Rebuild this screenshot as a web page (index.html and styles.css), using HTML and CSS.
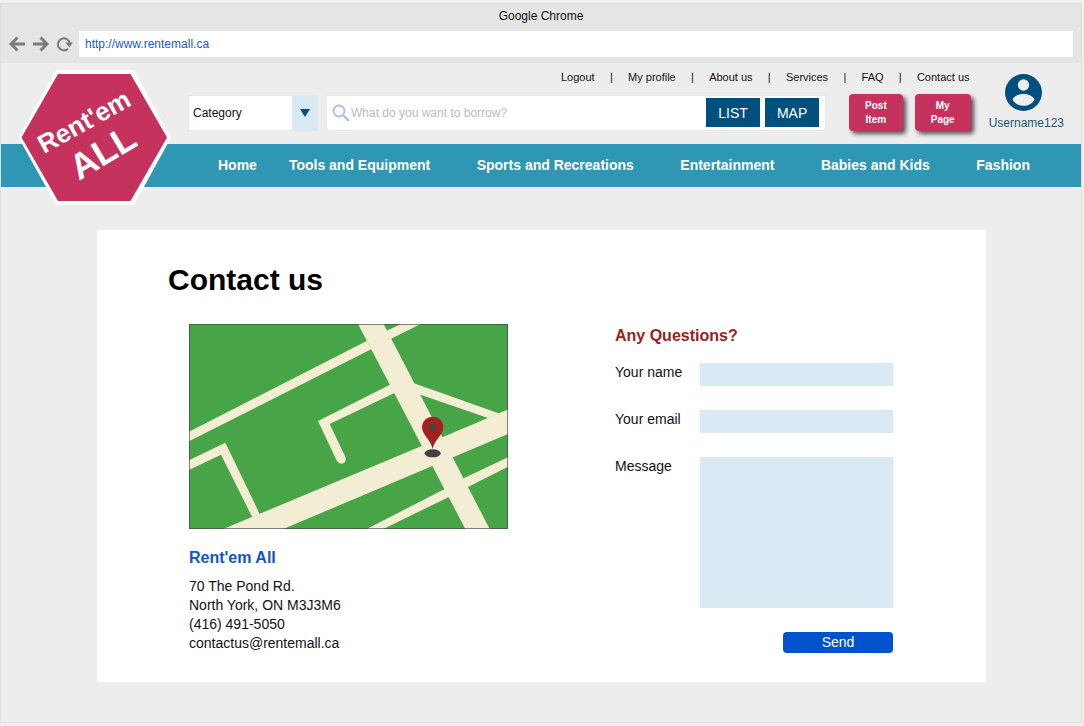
FILE: index.html
```html
<!DOCTYPE html>
<html lang="en">
<head>
<meta charset="utf-8">
<title>Rent'em All - Contact us</title>
<link rel="stylesheet" href="styles.css">
</head>
<body>
<div class="window">
  <div class="chrome">
    <div class="chrome-title">Google Chrome</div>
    <div class="toolbar">
      <div class="toolbar-buttons">
        <button class="icon-button" type="button" aria-label="Back">
          <svg viewBox="0 0 16 16"><path d="M16 8H3M8.500 1.500L2 8l6.500 6.500" fill="none" stroke="#7a7a7a" stroke-width="2.900"/></svg>
        </button>
        <button class="icon-button" type="button" aria-label="Forward">
          <svg viewBox="0 0 16 16"><path d="M0 8H13M7.500 1.500L14 8l-6.500 6.500" fill="none" stroke="#7a7a7a" stroke-width="2.900"/></svg>
        </button>
        <button class="icon-button" type="button" aria-label="Reload">
          <svg viewBox="0 0 16 16"><path d="M11 12.800A6 6 0 1 1 12.800 7" fill="none" stroke="#7a7a7a" stroke-width="2"/><path d="M8.500 6.500H16L12.300 11.500z" fill="#7a7a7a"/></svg>
        </button>
      </div>
      <input class="url" type="text" aria-label="Address" value="http://www.rentemall.ca">
    </div>
  </div>

  <div class="site-top">
    <a class="logo" href="#" aria-label="Rent'em All">
      <svg viewBox="17 69 156 138">
        <path d="M56 70H134L171 137.500 134 205H56L18.500 137.500z" fill="#fff"/>
        <path d="M58 74H130.500L167 137.500 130.500 201H58L21.500 137.500z" fill="#c4325d"/>
        <g class="logo-text">
          <text font-size="26" transform="translate(44 154) rotate(-29)">Rent'em</text>
          <text font-size="36" transform="translate(79 181) rotate(-31)">ALL</text>
        </g>
      </svg>
    </a>
    <header class="header">
      <div class="header-main">
        <nav class="links" aria-label="Account">
          <a href="#">Logout</a><span>|</span>
          <a href="#">My profile</a><span>|</span>
          <a href="#">About us</a><span>|</span>
          <a href="#">Services</a><span>|</span>
          <a href="#">FAQ</a><span>|</span>
          <a href="#">Contact us</a>
        </nav>
        <div class="tools">
          <div class="category">
            <select class="category-select" aria-label="Category"><option>Category</option></select>
            <span class="category-arrow"><svg viewBox="0 0 10 8"><path d="M0 0H10L5 8z" fill="#00507d"/></svg></span>
          </div>
          <form class="search">
            <svg class="search-icon" viewBox="0 0 18 18"><g fill="none" stroke="#a9c0ee"><circle cx="7" cy="7" r="5.500" stroke-width="1.900"/><path d="M11 11l6 6" stroke-width="2.300"/></g></svg>
            <input class="search-input" type="text" aria-label="Search" placeholder="What do you want to borrow?">
            <button class="mode" type="button">LIST</button>
            <button class="mode" type="button">MAP</button>
          </form>
          <div class="actions">
            <button class="action" type="button">Post<br>Item</button>
            <button class="action" type="button">My<br>Page</button>
          </div>
        </div>
      </div>
      <a class="user" href="#">
        <svg class="avatar" viewBox="0 0 37 37"><circle cx="18.500" cy="18.500" r="18.500" fill="#00507d"/><circle cx="18.500" cy="11" r="5.700" fill="#eee"/><path d="M7.500 25.500C9 22 13.500 20 18.500 20S28 22 29.500 25.500C27 30 23 31.800 18.500 31.800S10 30 7.500 25.500z" fill="#eee"/></svg>
        <span>Username123</span>
      </a>
    </header>
    <nav class="main-nav" aria-label="Categories">
      <a class="home" href="#">Home</a>
      <div class="departments">
        <a href="#">Tools and Equipment</a>
        <a href="#">Sports and Recreations</a>
        <a href="#">Entertainment</a>
        <a href="#">Babies and Kids</a>
        <a href="#">Fashion</a>
      </div>
    </nav>
  </div>

  <main class="content">
    <section class="card">
      <h1>Contact us</h1>
      <div class="columns">
        <div class="location">
          <svg class="map" viewBox="27 28 957 615" role="img" aria-label="Map to our office">
            <rect x="27" y="28" width="957" height="615" fill="#47a447"/>
            <g fill="#f3edd3">
              <path d="M534 28H611L929 643H856z"/>
              <path d="M27 351L560 79 575 103 27 380z"/>
              <path d="M618 49L663 28H722L632 73z"/>
              <path d="M130 643L725 394 980 286H984V358L310 643z"/>
              <path d="M27 437L136 384 240 600 216 606 123 420 27 466z"/>
              <path d="M630 210L414 319 471 440Q479 450 490 446 501 439 496 426L449 328 645 234z"/>
              <path d="M700 205L960 297 924 310 715 238z"/>
              <path d="M560 643L794 523 808 546 610 643z"/>
              <path d="M846 493L984 428V456L862 518z"/>
            </g>
            <ellipse cx="758" cy="416" rx="24" ry="12" fill="#453f45"/>
            <path d="M758 403C754 378 726 360 726 338A32 32 0 0 1 790 338C790 360 762 378 758 403z" fill="#a3211f"/>
            <circle cx="758" cy="338" r="11" fill="#504143"/>
            <rect x="28.500" y="29.500" width="954" height="612" fill="none" stroke="#444" stroke-opacity=".65" stroke-width="3"/>
          </svg>
          <h2 class="company">Rent'em All</h2>
          <address>70 The Pond Rd.<br>North York, ON M3J3M6<br>(416) 491-5050<br>contactus@rentemall.ca</address>
        </div>
        <form class="contact">
          <h2 class="questions">Any Questions?</h2>
          <div class="fields">
            <label for="name">Your name</label>
            <input id="name" class="field" type="text">
            <label for="email">Your email</label>
            <input id="email" class="field" type="email">
            <label for="message">Message</label>
            <textarea id="message" class="field message"></textarea>
            <button class="send" type="button">Send</button>
          </div>
        </form>
      </div>
    </section>
  </main>
</div>
</body>
</html>
```

FILE: styles.css
```css
* {
  box-sizing: border-box;
}

body {
  margin: 0;
  padding: 4px 3px 4px 1px;
  min-height: 100vh;
  display: flex;
  background: #f0f0f0;
  color: #111;
  font-family: "Liberation Sans", Arial, sans-serif;
  font-size: 14px;
}

a {
  color: inherit;
  text-decoration: none;
}

button,
input,
select,
textarea {
  margin: 0;
  padding: 0;
  border: 0;
  border-radius: 0;
  font: inherit;
  color: inherit;
}

svg {
  display: block;
}

.window {
  flex: 1;
  min-width: 0;
  background: #ededed;
  box-shadow: 0 0 0 1px #dfdfdf;
}

/* Browser bar */
.chrome {
  padding: 5px 8px 6px;
  background: #e5e5e5;
  font-size: 12px;
}

.chrome-title {
  margin-bottom: 8px;
  line-height: 14px;
  text-align: center;
}

.toolbar,
.toolbar-buttons {
  display: flex;
  align-items: center;
  gap: 6px;
}

.toolbar-buttons {
  gap: 8px;
}

.icon-button {
  width: 16px;
  height: 16px;
  background: none;
}

.url {
  flex: 1;
  min-width: 0;
  height: 26px;
  padding: 0 6px;
  background: #fff;
  color: #1a5cc8;
}

/* Site header */
.site-top {
  position: relative;
}

.logo {
  position: absolute;
  top: 6px;
  left: 16px;
  width: 156px;
}

.logo-text {
  fill: #fff;
  font-weight: bold;
}

.header {
  display: flex;
  gap: 18px;
  padding: 7px 17px 13px 187px;
}

.header-main {
  flex: 1;
  min-width: 0;
}

.links {
  display: flex;
  justify-content: space-between;
  margin-bottom: 10px;
  padding: 0 1px 0 373px;
  font-size: 11px;
  line-height: 14px;
}

.tools {
  display: flex;
  align-items: center;
}

.category,
.search {
  display: flex;
  align-items: center;
  height: 36px;
  border: 1px solid #e4e8ea;
  background: #fff;
}

.category {
  position: relative;
  width: 130px;
  margin-right: 8px;
  font-size: 12px;
}

.category-select {
  width: 100%;
  height: 100%;
  padding: 0 30px 0 4px;
  appearance: none;
  background: #fff;
}

.category-arrow {
  position: absolute;
  top: 0;
  right: 0;
  bottom: 0;
  width: 25px;
  display: grid;
  place-items: center;
  background: #d8ebf4;
  pointer-events: none;
}

.category-arrow svg {
  width: 10px;
}

.search {
  flex: 1;
  min-width: 0;
  gap: 5px;
  padding: 0 6px 0 5px;
}

.search-icon {
  width: 18px;
  flex: none;
}

.search-input {
  flex: 1;
  min-width: 0;
  margin-left: -4px;
  height: 30px;
  font-size: 12px;
}

.search-input::placeholder {
  color: #bbb;
}

.mode {
  width: 54px;
  height: 29px;
  background: #00507d;
  color: #fff;
}

.actions {
  display: flex;
  gap: 12px;
  margin-left: 23px;
}

.action {
  height: 37px;
  padding: 0 16px;
  border-radius: 4px;
  background: #c4325d;
  box-shadow: 3px 3px 4px #555;
  color: #fff;
  font-size: 10px;
  font-weight: bold;
  line-height: 14px;
}

.user {
  display: flex;
  flex-direction: column;
  align-items: center;
  gap: 5px;
  padding-top: 4px;
  color: #1c5275;
  font-size: 12px;
  line-height: 14px;
}

.avatar {
  width: 37px;
  margin-right: 6px;
}

.main-nav {
  display: flex;
  gap: 32px;
  padding: 0 51px 0 217px;
  background: #2f96b4;
  color: #fff;
  font-weight: bold;
  line-height: 43px;
}

.departments {
  flex: 1;
  display: flex;
  justify-content: space-between;
}

/* Contact card */
.content {
  padding: 43px 95px 40px 96px;
}

.card {
  padding: 32px 93px 29px 71px;
  background: #fff;
}

h1 {
  margin: 0 0 26px;
  color: #000;
  font-size: 30px;
  line-height: 36px;
}

h2 {
  margin: 0;
  font-size: 16px;
  line-height: 20px;
}

.columns {
  display: grid;
  grid-template-columns: 319fr 278fr;
  gap: 107px;
  padding-left: 21px;
}

.map {
  width: 100%;
}

.company {
  margin: 19px 0 9px;
  color: #0f55c4;
}

address {
  font-style: normal;
  line-height: 19px;
}

.contact {
  padding-top: 2px;
}

.questions {
  margin-bottom: 17px;
  color: #962222;
}

.fields {
  display: grid;
  grid-template-columns: 85px 1fr;
  row-gap: 24px;
  line-height: 19px;
}

.field {
  width: 100%;
  height: 23px;
  padding: 0 4px;
  background: #d8ebf4;
}

.message {
  height: 151px;
  resize: none;
}

.send {
  grid-column: 2;
  justify-self: end;
  width: 110px;
  height: 21px;
  border-radius: 4px;
  background: #0053cd;
  color: #fff;
}
```
